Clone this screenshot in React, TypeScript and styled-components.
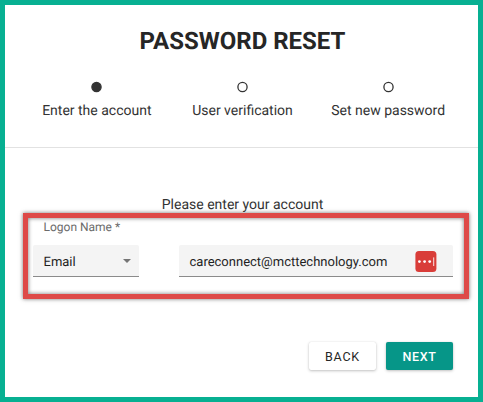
import React from "react";
import styled, { createGlobalStyle, css } from "styled-components";

const GlobalStyle = createGlobalStyle`
  * { box-sizing: border-box; }
  body {
    margin: 0;
    font-family: Roboto, "Liberation Sans", sans-serif;
    color: #333;
    text-rendering: geometricPrecision;
  }
`;

const Page = styled.main`
  display: flex;
  flex-direction: column;
  width: 483px;
  height: 402px;
  border: 5px solid #07b092;
  background: #fff;
  overflow: hidden;
`;

const Header = styled.header`
  flex: none;
  height: 143px;
  padding: 20px 17px 0 19px;
  border-bottom: 1px solid #e2e2e2;
`;

const Title = styled.h1`
  margin: 0;
  font-size: 24px;
  line-height: 32px;
  font-weight: 700;
  text-align: center;
  color: #262626;
`;

const Steps = styled.ol`
  display: grid;
  grid-template-columns: repeat(3, 1fr);
  margin: 24px 0 0;
  padding: 0;
  list-style: none;
`;

const Step = styled.li`
  display: flex;
  flex-direction: column;
  align-items: center;
  gap: 6.5px;
  font-size: 14px;
  line-height: 20px;
  white-space: nowrap;
`;

const Prompt = styled.p`
  flex: none;
  margin: 47px 0 0;
  height: 18px;
  padding-left: 2px;
  font-size: 14px;
  line-height: 20px;
  text-align: center;
`;

const Highlight = styled.section`
  flex: none;
  width: 446px;
  height: 86px;
  margin-left: 18px;
  padding: 0 11px 0 5px;
  border: 5px solid #de4a48;
  box-shadow: 0 0 4px rgba(0, 0, 0, 0.55), inset 0 0 4px rgba(0, 0, 0, 0.55);
`;

const Label = styled.label`
  display: block;
  height: 27px;
  padding-left: 10.5px;
  font-size: 12px;
  line-height: 18px;
  color: #6b6b6b;
`;

const Fields = styled.div`
  display: grid;
  grid-template-columns: 106px 274px;
  gap: 40px;
`;

const Field = styled.div<{ $end: number }>`
  display: flex;
  align-items: center;
  justify-content: space-between;
  height: 32px;
  padding: 1px ${(p) => p.$end}px 0 10.5px;
  border-bottom: 1px solid #8b8b8b;
  border-radius: 2px 2px 0 0;
  background: #f4f4f4;
  font-size: 13px;
  color: #1f1f1f;
`;

const Value = styled.span`
  padding-top: 3px;
  line-height: 16px;
`;

const Actions = styled.footer`
  display: flex;
  justify-content: flex-end;
  gap: 10px;
  margin-top: 43px;
  padding-right: 25px;
`;

const Button = styled.button<{ $primary?: boolean }>`
  width: 67px;
  height: 28px;
  padding: 1px 0 0;
  border: 0;
  border-radius: 2px;
  font: 450 12.5px/27px Roboto, "Liberation Sans", sans-serif;
  letter-spacing: 0.75px;
  background: #fff;
  color: #262626;
  box-shadow: 0 1px 3px rgba(0, 0, 0, 0.24), 0 0 1px rgba(0, 0, 0, 0.15);
  ${(p) =>
    p.$primary &&
    css`
      background: #069688;
      color: #fff;
      font-weight: 500;
      letter-spacing: 0.6px;
    `}
`;

const steps = ["Enter the account", "User verification", "Set new password"];

const Dot = ({ active }: { active: boolean }) => (
  <svg width="13" height="13" viewBox="0 0 13 13" aria-hidden="true">
    <circle
      cx="6.5"
      cy="6"
      r="4.6"
      fill={active ? "#333" : "none"}
      stroke="#333"
      strokeWidth="1.3"
    />
  </svg>
);

const Caret = () => (
  <svg width="8" height="4" viewBox="0 0 8 4" aria-hidden="true">
    <path d="M0 0h8L4 4z" fill="#757575" />
  </svg>
);

const PasswordManagerIcon = () => (
  <svg width="22" height="21" viewBox="0 0 22 21" aria-hidden="true">
    <rect x="0.4" width="21" height="21" rx="3.5" fill="#d93d39" />
    <circle cx="4.4" cy="10.6" r="1.4" fill="#fff" />
    <circle cx="9.6" cy="10.6" r="1.4" fill="#fff" />
    <circle cx="14.7" cy="10.6" r="1.4" fill="#fff" />
    <rect x="18.2" y="6.4" width="1" height="8.6" fill="#fff" opacity="0.85" />
  </svg>
);

export default function App() {
  return (
    <>
      <GlobalStyle />
      <Page>
        <Header>
          <Title>PASSWORD RESET</Title>
          <Steps>
            {steps.map((name, i) => (
              <Step key={name}>
                <Dot active={i === 0} />
                {name}
              </Step>
            ))}
          </Steps>
        </Header>
        <Prompt>Please enter your account</Prompt>
        <Highlight>
          <Label>Logon Name *</Label>
          <Fields>
            <Field $end={8.5}>
              <Value>Email</Value>
              <Caret />
            </Field>
            <Field $end={16}>
              <Value>careconnect@mcttechnology.com</Value>
              <PasswordManagerIcon />
            </Field>
          </Fields>
        </Highlight>
        <Actions>
          <Button>BACK</Button>
          <Button $primary>NEXT</Button>
        </Actions>
      </Page>
    </>
  );
}
